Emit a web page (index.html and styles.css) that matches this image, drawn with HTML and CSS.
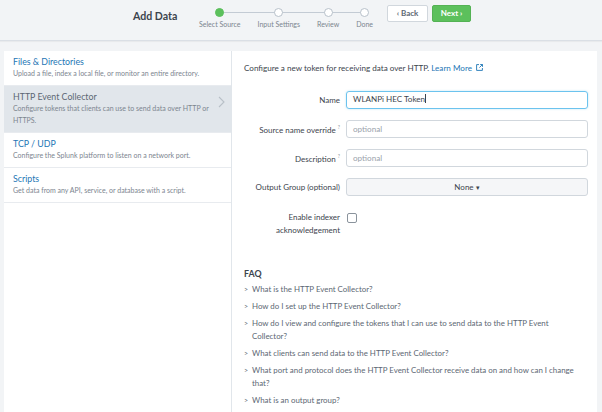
FILE: index.html
```html
<!DOCTYPE html>
<html>
<head>
<meta charset="utf-8">
<link rel="stylesheet" href="styles.css">
</head>
<body>
<header class="topbar">
  <div class="title">Add Data</div>
  <div class="steps">
    <div class="step-line"></div>
    <div class="step active"><span class="dot"></span><span class="step-label">Select Source</span></div>
    <div class="step"><span class="dot"></span><span class="step-label">Input Settings</span></div>
    <div class="step"><span class="dot"></span><span class="step-label">Review</span></div>
    <div class="step"><span class="dot"></span><span class="step-label">Done</span></div>
  </div>
  <div class="buttons">
    <button class="btn btn-back">&#8249; Back</button>
    <button class="btn btn-next">Next &#8250;</button>
  </div>
</header>
<main class="main">
  <nav class="sources">
    <div class="source">
      <div class="source-title">Files &amp; Directories</div>
      <div class="source-desc">Upload a file, index a local file, or monitor an entire directory.</div>
    </div>
    <div class="source selected">
      <div class="source-title">HTTP Event Collector</div>
      <div class="source-desc">Configure tokens that clients can use to send data over HTTP or HTTPS.</div>
      <svg class="chev" width="7" height="12" viewBox="0 0 7 12"><path d="M1 1l5 5-5 5" fill="none" stroke="#b8c0c8" stroke-width="1.1"/></svg>
    </div>
    <div class="source">
      <div class="source-title">TCP / UDP</div>
      <div class="source-desc">Configure the Splunk platform to listen on a network port.</div>
    </div>
    <div class="source">
      <div class="source-title">Scripts</div>
      <div class="source-desc">Get data from any API, service, or database with a script.</div>
    </div>
  </nav>
  <section class="content">
    <p class="intro">Configure a new token for receiving data over HTTP. <a class="link">Learn More <svg width="7" height="7" viewBox="0 0 7 7"><path d="M3 .6H.6v5.8h5.8V4" fill="none" stroke="#1d76b5" stroke-width=".9"/><path d="M3.4 3.6L6.4.6M4.2.5h2.3v2.3" fill="none" stroke="#1d76b5" stroke-width=".9"/></svg></a></p>
    <div class="form">
      <div class="row">
        <label class="label">Name</label>
        <div class="input focus">WLANPi HEC Token<span class="caret"></span></div>
      </div>
      <div class="row">
        <label class="label">Source name override <sup>?</sup></label>
        <div class="input placeholder">optional</div>
      </div>
      <div class="row">
        <label class="label">Description <sup>?</sup></label>
        <div class="input placeholder">optional</div>
      </div>
      <div class="row">
        <label class="label">Output Group (optional)</label>
        <div class="select">None <span class="tri">&#9662;</span></div>
      </div>
      <div class="row row-check">
        <label class="label">Enable indexer<br>acknowledgement</label>
        <span class="checkbox"></span>
      </div>
    </div>
    <h3 class="faq-title">FAQ</h3>
    <ul class="faq">
      <li><span class="arrow">&gt;</span><span>What is the HTTP Event Collector?</span></li>
      <li><span class="arrow">&gt;</span><span>How do I set up the HTTP Event Collector?</span></li>
      <li><span class="arrow">&gt;</span><span>How do I view and configure the tokens that I can use to send data to the HTTP Event Collector?</span></li>
      <li><span class="arrow">&gt;</span><span>What clients can send data to the HTTP Event Collector?</span></li>
      <li><span class="arrow">&gt;</span><span>What port and protocol does the HTTP Event Collector receive data on and how can I change that?</span></li>
      <li><span class="arrow">&gt;</span><span>What is an output group?</span></li>
    </ul>
  </section>
</main>
</body>
</html>
```
FILE: styles.css
```css
* { box-sizing: border-box; }
html, body { margin: 0; padding: 0; }
body {
  width: 602px;
  height: 412px;
  overflow: hidden;
  background: #f2f4f6;
  font-family: Lato, "Open Sans", sans-serif;
  color: #3c444d;
}
.topbar {
  height: 41px;
  display: flex;
  align-items: flex-start;
  padding: 5px 0 0 133px;
  border-bottom: 1px solid #dadfe5;
  box-shadow: 0 1px 1px rgba(0,0,0,0.04);
}
.title {
  font-size: 10.6px;
  font-weight: 700;
  line-height: 14px;
  margin-top: 4px;
  color: #3c444d;
  width: 66px;
}
.steps {
  display: flex;
  gap: 17px;
  position: relative;
  margin-top: 3px;
}
.step-line {
  position: absolute;
  top: 4px;
  left: 20px;
  right: 9px;
  height: 1px;
  background: #c3cbd4;
}
.step {
  display: flex;
  flex-direction: column;
  align-items: center;
  position: relative;
}
.dot {
  width: 9px;
  height: 9px;
  border-radius: 50%;
  border: 1px solid #b8c1ca;
  background: #fff;
}
.step.active .dot { background: #5cc05c; border-color: #5cc05c; }
.step-label {
  font-size: 7px;
  line-height: 9px;
  margin-top: 3px;
  color: #7c858f;
  white-space: nowrap;
}
.buttons {
  display: flex;
  gap: 4px;
  margin-left: 14px;
}
.btn {
  height: 17px;
  border-radius: 2px;
  font-family: Lato, sans-serif;
  font-size: 8px;
  font-weight: 700;
  padding: 0;
  line-height: 15px;
}
.btn-back {
  width: 41px;
  background: #fff;
  border: 1px solid #d1d7dd;
  color: #5c6773;
}
.btn-next {
  width: 39px;
  background: #5cc05c;
  border: 1px solid #54b254;
  color: #fff;
}
.main {
  display: flex;
  margin: 10px 5px 0 4px;
  height: 361px;
}
.sources {
  width: 228px;
  background: #fff;
  border-right: 1px solid #e1e6eb;
  flex: none;
}
.source {
  padding: 5px 9px 6px;
  border-bottom: 1px solid #e8ebef;
  position: relative;
}
.source.selected { background: #e1e6eb; }
.source-title {
  font-size: 8.8px;
  line-height: 11px;
  color: #1d76b5;
}
.source.selected .source-title { color: #5c6773; }
.source-desc {
  font-size: 7px;
  line-height: 12px;
  color: #7c858f;
  padding-right: 12px;
}
.chev {
  position: absolute;
  right: 6px;
  top: 10px;
}
.content {
  flex: 1;
  background: #fff;
  padding: 11px 9px 0 12px;
}
.intro {
  margin: 0;
  font-size: 8.1px;
  line-height: 12px;
  color: #3c444d;
}
.link { color: #1d76b5; }
.link svg { vertical-align: 0; margin-left: 2px; }
.form {
  margin-top: 17px;
  display: flex;
  flex-direction: column;
  gap: 11px;
}
.row {
  display: flex;
  align-items: center;
  gap: 6px;
}
.label {
  width: 96px;
  flex: none;
  text-align: right;
  font-size: 8px;
  color: #3c444d;
  line-height: 13px;
}
.label sup { font-size: 5px; vertical-align: 4px; color: #8a939c; }
.input {
  flex: 1;
  height: 18px;
  border: 1px solid #d1d7dd;
  border-radius: 3px;
  padding: 0 6px;
  font-size: 8.1px;
  line-height: 16px;
  color: #3c444d;
}
.input.focus {
  border: 1.5px solid #6cc3ee;
  box-shadow: 0 0 2px rgba(108,195,238,0.5);
  line-height: 15px;
}
.caret {
  display: inline-block;
  width: 0.7px;
  height: 9px;
  background: #3c444d;
  vertical-align: -1px;
}
.input.placeholder { color: #9aa2ab; }
.select {
  flex: 1;
  height: 18px;
  border: 1px solid #d1d7dd;
  border-radius: 3px;
  background: #f5f6f8;
  text-align: center;
  font-size: 8px;
  line-height: 16px;
  color: #3c444d;
}
.tri { font-size: 7px; }
.row-check { align-items: flex-start; margin-top: 4px; }
.checkbox {
  width: 10px;
  height: 10px;
  border: 1px solid #8a939c;
  border-radius: 2px;
  margin-top: 2px;
  margin-left: 1px;
}
.faq-title {
  margin: 31px 0 0;
  font-size: 8.8px;
  font-weight: 700;
  line-height: 12px;
  color: #3c444d;
}
.faq {
  list-style: none;
  margin: 3px 0 0;
  padding: 0;
  display: flex;
  flex-direction: column;
  gap: 4px;
}
.faq li {
  display: flex;
  font-size: 7.9px;
  line-height: 13px;
  color: #5c6773;
  padding-right: 4px;
}
.arrow {
  width: 8px;
  flex: none;
  font-size: 7px;
  color: #5c6773;
}
```
